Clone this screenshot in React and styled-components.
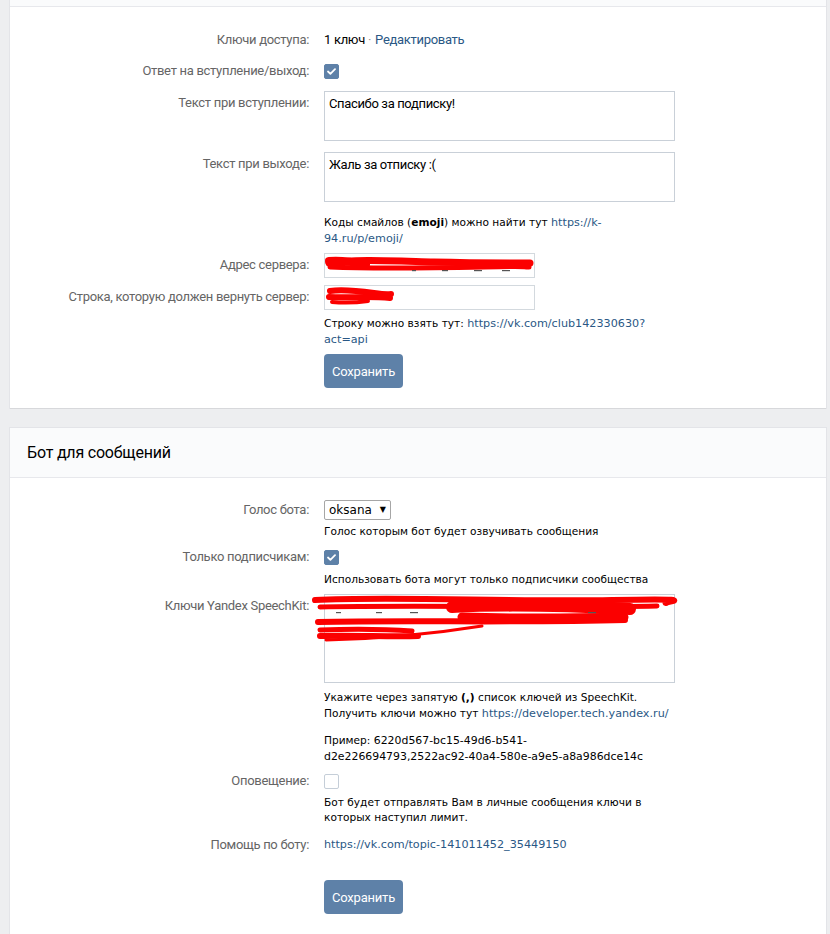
import React from "react";
import styled, { createGlobalStyle } from "styled-components";

const GlobalStyle = createGlobalStyle`
  html, body {
    margin: 0;
    padding: 0;
    background: #edeef0;
  }
  body {
    font-family: "DejaVu Sans", "Noto Sans", sans-serif;
  }
`;

const NARROW = `"Roboto", "Liberation Sans", sans-serif`;
const BODY = `"DejaVu Sans", "Noto Sans", sans-serif`;

const Page = styled.div`
  padding: 0 4px 0 10px;
  width: 816px;
`;

const Card = styled.section`
  background: #fff;
  box-shadow: 0 1px 0 0 #d7d8db, 0 0 0 1px #e3e4e8;
  margin-top: ${(p) => p.$mt || 0}px;
`;

const CutHeader = styled.div`
  height: 6px;
  background: #fafbfc;
  border-bottom: 1px solid #e7e8ec;
`;

const CardHeader = styled.header`
  height: 49px;
  display: flex;
  align-items: center;
  padding-left: 17px;
  background: #fafbfc;
  border-bottom: 1px solid #e7e8ec;
  font-family: ${NARROW};
  font-size: 16px;
  letter-spacing: -0.2px;
  color: #000;
`;

const Body = styled.div`
  padding: ${(p) => p.$pt}px 0 20px 0;
`;

const Row = styled.div`
  display: grid;
  grid-template-columns: 299px 351px;
  column-gap: 15px;
  margin-top: ${(p) => p.$mt || 0}px;
`;

const Label = styled.div`
  text-align: right;
  font-family: ${NARROW};
  font-size: 13px;
  letter-spacing: -0.3px;
  line-height: 18px;
  color: #656565;
  padding-top: ${(p) => p.$pt || 0}px;
  white-space: nowrap;
`;

const Value = styled.div`
  font-family: ${NARROW};
  font-size: 13px;
  letter-spacing: -0.3px;
  line-height: 18px;
  color: #000;
`;

const Link = styled.a`
  color: #2a5885;
  text-decoration: none;
`;

const Dot = styled.span`
  margin: 0 4px 0 3px;
  color: #939393;
`;

const CheckCell = styled.div`
  height: 18px;
  display: flex;
  align-items: center;
`;

const Checkbox = styled.span`
  width: 15px;
  height: 15px;
  box-sizing: border-box;
  border-radius: 2px;
  display: inline-flex;
  align-items: center;
  justify-content: center;
  background: ${(p) => (p.$on ? "#5e81a8" : "#fff")};
  border: 1px solid ${(p) => (p.$on ? "#5e81a8" : "#c5ced8")};
`;

const TextArea = styled.div`
  box-sizing: border-box;
  width: 351px;
  height: ${(p) => p.$h}px;
  border: 1px solid #c9d0d8;
  padding: 3px 4px;
  font-family: ${NARROW};
  font-size: 13px;
  letter-spacing: -0.35px;
  line-height: 18px;
  color: #000;
  background: #fff;
`;

const Input = styled.div`
  box-sizing: border-box;
  width: 211px;
  height: 25px;
  border: 1px solid #d3d9de;
  background: #fff;
`;

const Masked = styled.div`
  position: relative;
  width: fit-content;
`;

const Scribble = styled.svg`
  position: absolute;
  left: ${(p) => p.$x}px;
  top: ${(p) => p.$y}px;
  overflow: visible;
  pointer-events: none;
`;

const Code = styled.span`
  font-size: 10.9px;
`;

const Hint = styled.div`
  font-family: ${BODY};
  font-size: 10.6px;
  line-height: ${(p) => p.$lh || 16}px;
  color: #000;
  margin-top: ${(p) => p.$mt || 0}px;
  width: ${(p) => p.$w || 351}px;
  b {
    font-weight: bold;
  }
  ${Link} {
    font-size: 11.2px;
    line-height: 1;
  }
  ${Code} {
    line-height: 1;
  }
`;

const HintPara = styled.p`
  margin: ${(p) => p.$mt || 0}px 0 0 0;
`;

const Select = styled.div`
  box-sizing: border-box;
  height: 20px;
  width: 67px;
  display: flex;
  align-items: center;
  justify-content: space-between;
  padding: 0 4px 0 4px;
  border: 1px solid #a6a6a6;
  border-radius: 2px;
  background: #fff;
  font-family: ${BODY};
  font-size: 12px;
  color: #000;
`;

const Caret = styled.span`
  font-size: 8px;
  line-height: 1;
`;

const Button = styled.button`
  box-sizing: border-box;
  height: 34px;
  width: 79px;
  border: 0;
  border-radius: 4px;
  background: #5e81a8;
  color: #fff;
  font-family: ${NARROW};
  font-size: 13px;
  letter-spacing: -0.2px;
  padding: 0;
  cursor: pointer;
`;

const Tick = () => (
  <svg width="9" height="7" viewBox="0 0 9 7">
    <path d="M1 3.5 L3.4 5.8 L8 1.2" fill="none" stroke="#fff" strokeWidth="1.8" strokeLinecap="round" strokeLinejoin="round" />
  </svg>
);

const Red = ({ d, w }) => (
  <path d={d} fill="none" stroke="#fb0000" strokeWidth={w} strokeLinecap="round" strokeLinejoin="round" />
);

const Ink = ({ x, y, w }) => <rect x={x} y={y} width={w} height="1.2" fill="#555" />;

function ServerScribble() {
  return (
    <Scribble $x={0} $y={0} width="211" height="25" viewBox="0 0 211 25">
      <Red d="M5 10 C30 6, 70 8, 110 9 S180 10, 206 10" w={7} />
      <Red d="M6 14 C50 16, 110 15, 160 14 S195 14, 205 14" w={5} />
      <Red d="M5 8 C15 7, 30 9, 42 12" w={8} />
      <Ink x={88} y={17} w={4} />
      <Ink x={118} y={17} w={6} />
      <Ink x={150} y={17} w={8} />
      <Ink x={178} y={17} w={8} />
    </Scribble>
  );
}

function ReplyScribble() {
  return (
    <Scribble $x={0} $y={0} width="211" height="25" viewBox="0 0 211 25">
      <Red d="M6 6 C20 4, 35 6, 50 8 S64 9, 67 9" w={6} />
      <Red d="M5 12 C25 13, 45 11, 66 13" w={6} />
      <Red d="M8 17 C20 18, 30 18, 44 16" w={4} />
    </Scribble>
  );
}

function KeysScribble() {
  return (
    <Scribble $x={-12} $y={0} width="360" height="55" viewBox="0 0 360 55">
      <Red d="M3 6 C80 2, 200 8, 300 6 S348 8, 354 9" w={6} />
      <Red d="M8 13 C100 11, 250 14, 345 12" w={5} />
      <Red d="M140 13 C200 10, 260 12, 318 15" w={12} />
      <Red d="M150 23 C220 25, 270 24, 312 23" w={9} />
      <Red d="M6 28 C100 26, 200 29, 313 26" w={6} />
      <Red d="M8 36 C40 35, 70 35, 100 37" w={5} />
      <Red d="M8 42 C40 41, 80 43, 106 42" w={6} />
      <Red d="M14 46 C60 45, 120 40, 170 32" w={3} />
      <Ink x={24} y={18} w={5} />
      <Ink x={64} y={18} w={6} />
      <Ink x={98} y={18} w={8} />
      <Ink x={276} y={18} w={8} />
    </Scribble>
  );
}

export default function App() {
  return (
    <Page>
      <GlobalStyle />
      <Card>
        <CutHeader />
        <Body $pt={24}>
          <Row>
            <Label>Ключи доступа:</Label>
            <Value>
              1 ключ<Dot>·</Dot>
              <Link href="#">Редактировать</Link>
            </Value>
          </Row>
          <Row $mt={13}>
            <Label>Ответ на вступление/выход:</Label>
            <CheckCell>
              <Checkbox $on>
                <Tick />
              </Checkbox>
            </CheckCell>
          </Row>
          <Row $mt={11}>
            <Label $pt={3}>Текст при вступлении:</Label>
            <TextArea $h={50}>Спасибо за подписку!</TextArea>
          </Row>
          <Row $mt={11}>
            <Label $pt={3}>Текст при выходе:</Label>
            <div>
              <TextArea $h={50}>Жаль за отписку :(</TextArea>
              <Hint $mt={12} $w={305}>
                Коды смайлов (<b>emoji</b>) можно найти тут{" "}
                <Link href="#">https://k-94.ru/p/emoji/</Link>
              </Hint>
            </div>
          </Row>
          <Row $mt={7}>
            <Label $pt={3}>Адрес сервера:</Label>
            <Masked>
              <Input />
              <ServerScribble />
            </Masked>
          </Row>
          <Row $mt={7}>
            <Label $pt={3}>Строка, которую должен вернуть сервер:</Label>
            <div>
              <Masked>
                <Input />
                <ReplyScribble />
              </Masked>
              <Hint $mt={5} $w={340}>
                Строку можно взять тут:{" "}
                <Link href="#">https://vk.com/club142330630?act=api</Link>
              </Hint>
            </div>
          </Row>
          <Row $mt={7}>
            <div />
            <div>
              <Button>Сохранить</Button>
            </div>
          </Row>
        </Body>
      </Card>

      <Card $mt={20}>
        <CardHeader>Бот для сообщений</CardHeader>
        <Body $pt={22}>
          <Row>
            <Label $pt={1}>Голос бота:</Label>
            <div>
              <Select>
                oksana <Caret>▼</Caret>
              </Select>
              <Hint $mt={3}>Голос которым бот будет озвучивать сообщения</Hint>
            </div>
          </Row>
          <Row $mt={9}>
            <Label>Только подписчикам:</Label>
            <div>
              <CheckCell>
                <Checkbox $on>
                  <Tick />
                </Checkbox>
              </CheckCell>
              <Hint $mt={5}>Использовать бота могут только подписчики сообщества</Hint>
            </div>
          </Row>
          <Row $mt={7}>
            <Label $pt={3}>Ключи Yandex SpeechKit:</Label>
            <div>
              <Masked>
                <TextArea $h={89} />
                <KeysScribble />
              </Masked>
              <Hint $mt={6} $w={360}>
                <HintPara>
                  Укажите через запятую <b>(,)</b> список ключей из SpeechKit.
                  <br />
                  Получить ключи можно тут{" "}
                  <Link href="#">https://developer.tech.yandex.ru/</Link>
                </HintPara>
                <HintPara $mt={11}>
                  Пример: <Code>6220d567-bc15-49d6-b541-</Code>
                  <br />
                  <Code>d2e226694793,2522ac92-40a4-580e-a9e5-a8a986dce14c</Code>
                </HintPara>
              </Hint>
            </div>
          </Row>
          <Row $mt={8}>
            <Label>Оповещение:</Label>
            <div>
              <CheckCell>
                <Checkbox />
              </CheckCell>
              <Hint $mt={5} $lh={15} $w={330}>
                Бот будет отправлять Вам в личные сообщения ключи в которых наступил лимит.
              </Hint>
            </div>
          </Row>
          <Row $mt={11}>
            <Label>Помощь по боту:</Label>
            <Hint>
              <Link href="#">https://vk.com/topic-141011452_35449150</Link>
            </Hint>
          </Row>
          <Row $mt={26}>
            <div />
            <div>
              <Button>Сохранить</Button>
            </div>
          </Row>
        </Body>
      </Card>
    </Page>
  );
}
